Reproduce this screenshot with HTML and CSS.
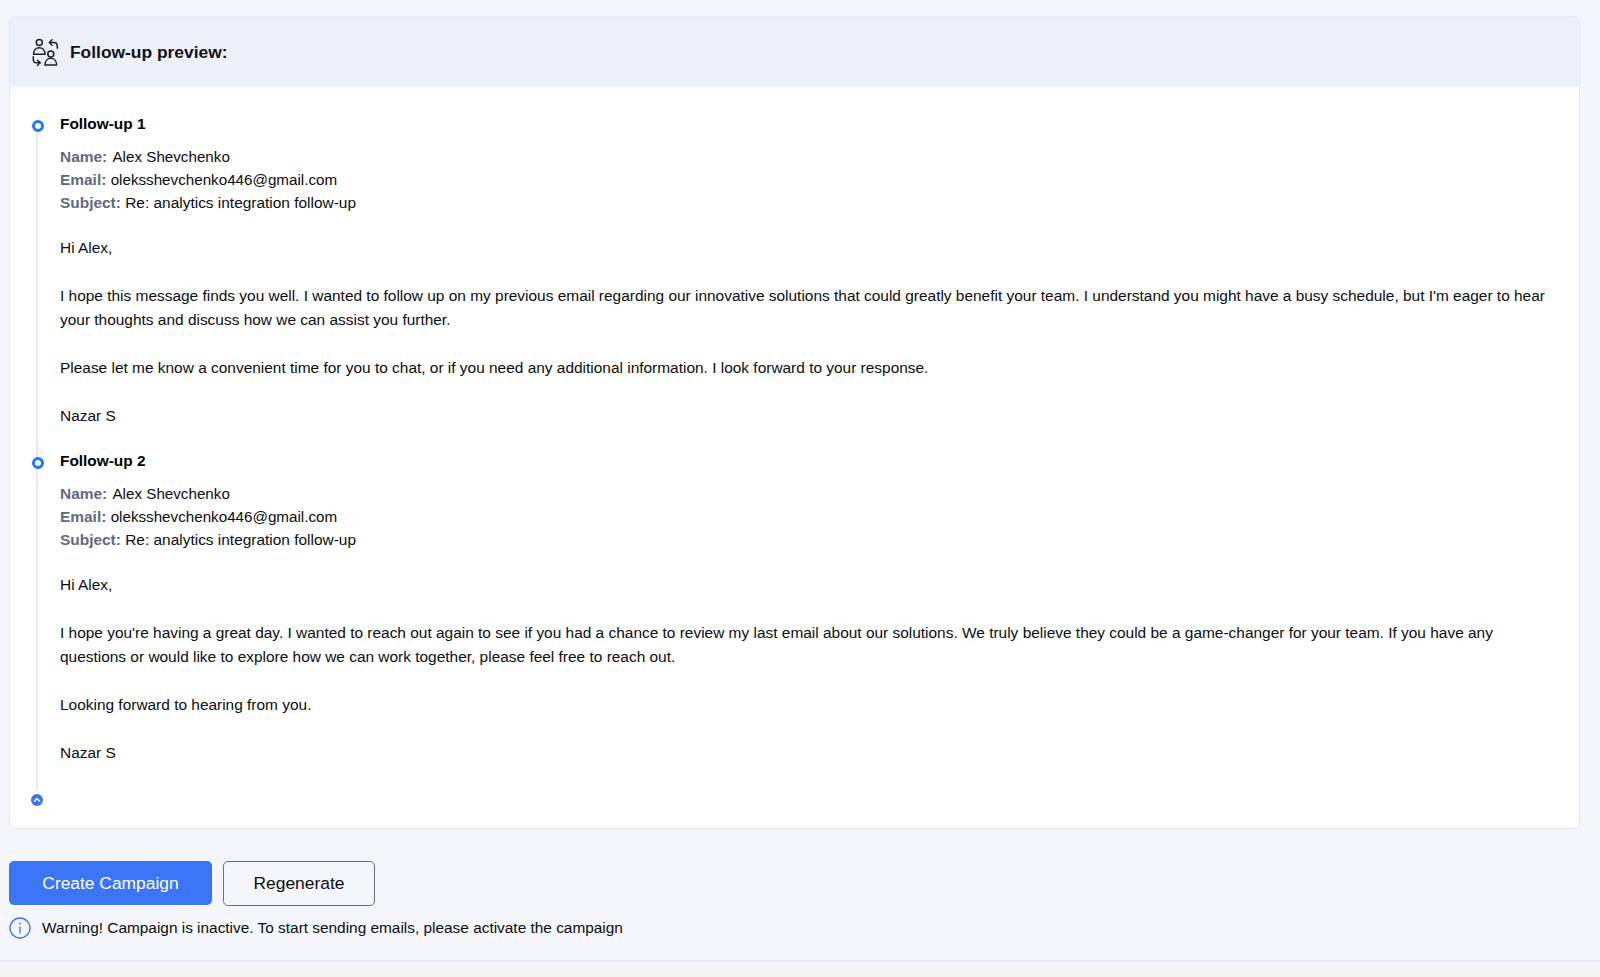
FILE: index.html
```html
<!DOCTYPE html>
<html lang="en">
<head>
<meta charset="utf-8">
<title>Follow-up preview</title>
<link rel="stylesheet" href="styles.css">
</head>
<body>
<main class="page">
  <section class="card">
    <header class="card-head">
      <svg class="head-icon" viewBox="0 0 28 28" fill="none" stroke="#1a1f26" stroke-width="1.5" stroke-linecap="round" stroke-linejoin="round">
        <circle cx="8.300" cy="4.600" r="3"/>
        <path d="M2.500 16.300c0-4 2.500-6.500 5.800-6.500s5.800 2.500 5.800 6.500z"/>
        <circle cx="19.800" cy="16" r="3"/>
        <path d="M14 27c0-4 2.500-6.700 5.800-6.700s5.800 2.700 5.800 6.700z"/>
        <path d="M26.300 10.300V8c0-2-1.300-3.500-3.300-3.500h-4"/>
        <path d="M21 1.800L18.300 4.500l2.700 2.700"/>
        <path d="M2.300 18.700v2.800c0 2 1.300 3.300 3.300 3.300H9"/>
        <path d="M6.500 22.300L9.200 24.800l-2.700 2.500"/>
      </svg>
      <h1 class="card-title">Follow-up preview:</h1>
    </header>
    <div class="timeline">
      <article class="item">
        <span class="dot"></span>
        <h2 class="item-title">Follow-up 1</h2>
        <div class="meta">
          <div><b>Name:</b> <span class="val-name">Alex Shevchenko</span></div>
          <div><b>Email:</b> <span class="val-email">oleksshevchenko446@gmail.com</span></div>
          <div><b>Subject:</b> Re: analytics integration follow-up</div>
        </div>
        <p>Hi Alex,</p>
        <p>I hope this message finds you well. I wanted to follow up on my previous email regarding our innovative solutions that could greatly benefit your team. I understand you might have a busy schedule, but I'm eager to hear your thoughts and discuss how we can assist you further.</p>
        <p>Please let me know a convenient time for you to chat, or if you need any additional information. I look forward to your response.</p>
        <p>Nazar S</p>
      </article>
      <article class="item">
        <span class="dot"></span>
        <h2 class="item-title">Follow-up 2</h2>
        <div class="meta">
          <div><b>Name:</b> <span class="val-name">Alex Shevchenko</span></div>
          <div><b>Email:</b> <span class="val-email">oleksshevchenko446@gmail.com</span></div>
          <div><b>Subject:</b> Re: analytics integration follow-up</div>
        </div>
        <p>Hi Alex,</p>
        <p>I hope you're having a great day. I wanted to reach out again to see if you had a chance to review my last email about our solutions. We truly believe they could be a game-changer for your team. If you have any questions or would like to explore how we can work together, please feel free to reach out.</p>
        <p>Looking forward to hearing from you.</p>
        <p>Nazar S</p>
      </article>
      <span class="collapse">
        <svg viewBox="0 0 12 12" fill="none" stroke="#fff" stroke-width="1.600" stroke-linecap="round" stroke-linejoin="round"><path d="M3.500 7l2.500-2.300L8.500 7"/></svg>
      </span>
    </div>
  </section>
  <div class="actions">
    <button class="btn btn-primary">Create Campaign</button>
    <button class="btn btn-outline">Regenerate</button>
  </div>
  <div class="warning">
    <svg class="info" viewBox="0 0 22 22" fill="none" stroke="#3b75f6" stroke-width="1.300" stroke-linecap="round"><circle cx="11" cy="11" r="10"/><path d="M11 10v6"/><path d="M11 6.300v.4" stroke-width="1.700"/></svg>
    <span>Warning! Campaign is inactive. To start sending emails, please activate the campaign</span>
  </div>
</main>
<div class="bottom"></div>
</body>
</html>
```
FILE: styles.css
```css
* { box-sizing: border-box; }
html, body { margin: 0; height: 100%; }
body {
  height: 977px;
  overflow: hidden;
  display: flex;
  flex-direction: column;
  background: #f5f6fb;
  color: #0b0d10;
  font-family: "Liberation Sans", Arial, sans-serif;
  font-size: 15.45px;
}
.page { flex: 1; padding: 16px 20px 0 9px; }
.card {
  height: 813px;
  background: #fff;
  border: 1px solid #e2e6f3;
  border-radius: 6px;
  overflow: hidden;
}
.card-head {
  height: 70px;
  background: #ecf0f9;
  display: flex;
  align-items: center;
  gap: 11px;
  padding-left: 21px;
}
.head-icon { width: 28px; height: 28px; }
.card-title { margin: 0; font-size: 17.4px; font-weight: 700; color: #10131a; }
.timeline { position: relative; padding: 25px 26px 0 50px; }
.timeline::before {
  content: "";
  position: absolute;
  left: 26px;
  top: 44px;
  height: 660px;
  width: 2px;
  background: #e8eaf0;
}
.item { position: relative; padding-bottom: 21px; }
.dot {
  position: absolute;
  left: -28px;
  top: 8px;
  width: 12px;
  height: 12px;
  border-radius: 50%;
  border: 3px solid #1e78ff;
  background: #fff;
}
.item-title { margin: 0 0 10px; font-size: 15.4px; line-height: 23px; font-weight: 700; color: #000; }
.meta { line-height: 23px; margin-bottom: 22px; }
.meta b { color: #5d6b7a; font-weight: 700; }
.val-name { font-size: 15.2px; margin-left: 1px; }
.val-email { font-size: 15.2px; }
.item p { margin: 0 0 24px; line-height: 24px; }
.item p:last-child { margin-bottom: 0; }
.collapse {
  position: absolute;
  left: 21px;
  top: 707px;
  width: 12px;
  height: 12px;
  border-radius: 50%;
  background: #3b75f6;
  display: flex;
}
.collapse svg { width: 12px; height: 12px; }
.actions { display: flex; gap: 11px; margin-top: 32px; }
.btn {
  height: 44px;
  border-radius: 5px;
  font-family: inherit;
  font-size: 17.4px;
  padding: 0;
}
.btn-primary { width: 203px; background: #3b75f6; color: #fff; border: 0; }
.btn-outline { width: 152px; height: 45px; background: transparent; color: #0b0d10; border: 1px solid #6b6f76; }
.warning { display: flex; align-items: center; gap: 11px; margin-top: 11px; font-size: 15.4px; }
.info { width: 22px; height: 22px; flex: none; }
.bottom { height: 17px; background: #f4f4f6; border-top: 1px solid #e1e4ee; }
```
